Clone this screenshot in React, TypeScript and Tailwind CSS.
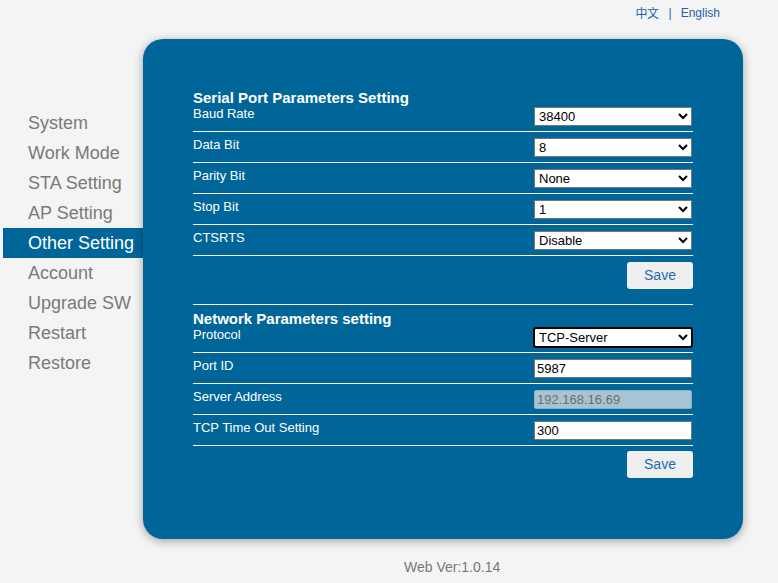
import React from 'react';

const menu = ['System', 'Work Mode', 'STA Setting', 'AP Setting', 'Other Setting', 'Account', 'Upgrade SW', 'Restart', 'Restore'];

function SelectBox({ value, options, focused }: { value: string; options: string[]; focused?: boolean }) {
  return (
    <select
      defaultValue={value}
      className={
        focused
          ? 'block w-[160px] h-[21px] -mt-[1px] bg-white text-black text-[13px] border-2 border-black rounded-[3px] pl-0 outline-none'
          : 'block w-[158px] h-[19px] bg-white text-black text-[13px] border border-[#767676] pl-0 outline-none'
      }
    >
      {options.map((o) => (
        <option key={o}>{o}</option>
      ))}
    </select>
  );
}

function TextBox({ value, disabled }: { value: string; disabled?: boolean }) {
  return (
    <input
      defaultValue={value}
      disabled={disabled}
      className={
        disabled
          ? 'block w-[158px] h-[19px] bg-[#a7c4d3] text-[#6d6d6d] text-[13px] border border-[#8fb0c2] rounded-[2px] px-[2px] outline-none'
          : 'block w-[158px] h-[19px] bg-white text-black text-[13px] border border-[#767676] px-[2px] outline-none'
      }
    />
  );
}

function Row({ label, children }: { label: string; children: React.ReactNode }) {
  return (
    <div className="flex justify-between items-start h-[31px] pt-[6px] border-b border-white">
      <span className="text-[13px] leading-[14px]">{label}</span>
      <div className="mr-[1px]">{children}</div>
    </div>
  );
}

function SaveButton() {
  return (
    <div className="flex justify-end">
      <button className="w-[66px] h-[27px] bg-[#efefef] text-[#1d6bb3] text-[14px] rounded-[3px]">Save</button>
    </div>
  );
}

export default function App() {
  return (
    <div className="w-[778px] h-[583px] bg-[#f4f4f4] font-['Liberation_Sans',Arial,sans-serif] overflow-hidden">
      <div className="h-[39px] flex justify-end items-start pt-[5px] pr-[58px] text-[12px] text-[#1d62a8]">
        <span className="font-['Noto_Sans_CJK_SC',sans-serif] leading-[16px] tracking-[-0.5px]">中文</span>
        <span className="ml-[10px] mr-[9px] leading-[16px]">|</span>
        <span className="leading-[16px]">English</span>
      </div>

      <div className="flex">
        <div className="w-[143px] pt-[69px]">
          {menu.map((m) =>
            m === 'Other Setting' ? (
              <div key={m} className="ml-[3px] h-[30px] flex items-center pl-[25px] bg-[#006699] text-white text-[18px]">
                {m}
              </div>
            ) : (
              <div key={m} className="h-[30px] flex items-center pl-[28px] text-[#7a7a7a] text-[18px]">
                {m}
              </div>
            )
          )}
        </div>

        <div className="w-[600px] h-[500px] bg-[#006699] rounded-[20px] shadow-[0_2px_10px_rgba(0,0,0,0.35)] pt-[50px] pl-[50px] text-white">
          <div className="w-[500px]">
            <div className="text-[15px] font-bold leading-[17px]">Serial Port Parameters Setting</div>
            <div className="flex justify-between items-start h-[26px] border-b border-white">
              <span className="text-[13px] leading-[15px]">Baud Rate</span>
              <div className="mr-[1px] mt-[1px]">
                <SelectBox value="38400" options={['9600', '19200', '38400', '57600', '115200']} />
              </div>
            </div>
            <Row label="Data Bit">
              <SelectBox value="8" options={['7', '8']} />
            </Row>
            <Row label="Parity Bit">
              <SelectBox value="None" options={['None', 'Odd', 'Even']} />
            </Row>
            <Row label="Stop Bit">
              <SelectBox value="1" options={['1', '2']} />
            </Row>
            <Row label="CTSRTS">
              <SelectBox value="Disable" options={['Disable', 'Enable']} />
            </Row>
            <div className="pt-[6px] pb-[15px] border-b border-white">
              <SaveButton />
            </div>

            <div className="pt-[5px] text-[15px] font-bold leading-[17px]">Network Parameters setting</div>
            <div className="flex justify-between items-start h-[26px] border-b border-white">
              <span className="text-[13px] leading-[15px]">Protocol</span>
              <div className="mt-[1px]">
                <SelectBox value="TCP-Server" options={['TCP-Server', 'TCP-Client', 'UDP']} focused />
              </div>
            </div>
            <Row label="Port ID">
              <TextBox value="5987" />
            </Row>
            <Row label="Server Address">
              <TextBox value="192.168.16.69" disabled />
            </Row>
            <Row label="TCP Time Out Setting">
              <TextBox value="300" />
            </Row>
            <div className="pt-[5px]">
              <SaveButton />
            </div>
          </div>
        </div>
      </div>

      <div className="pt-[20px] pl-[404px] text-[14px] text-[#777777] leading-[16px]">Web Ver:1.0.14</div>
    </div>
  );
}
